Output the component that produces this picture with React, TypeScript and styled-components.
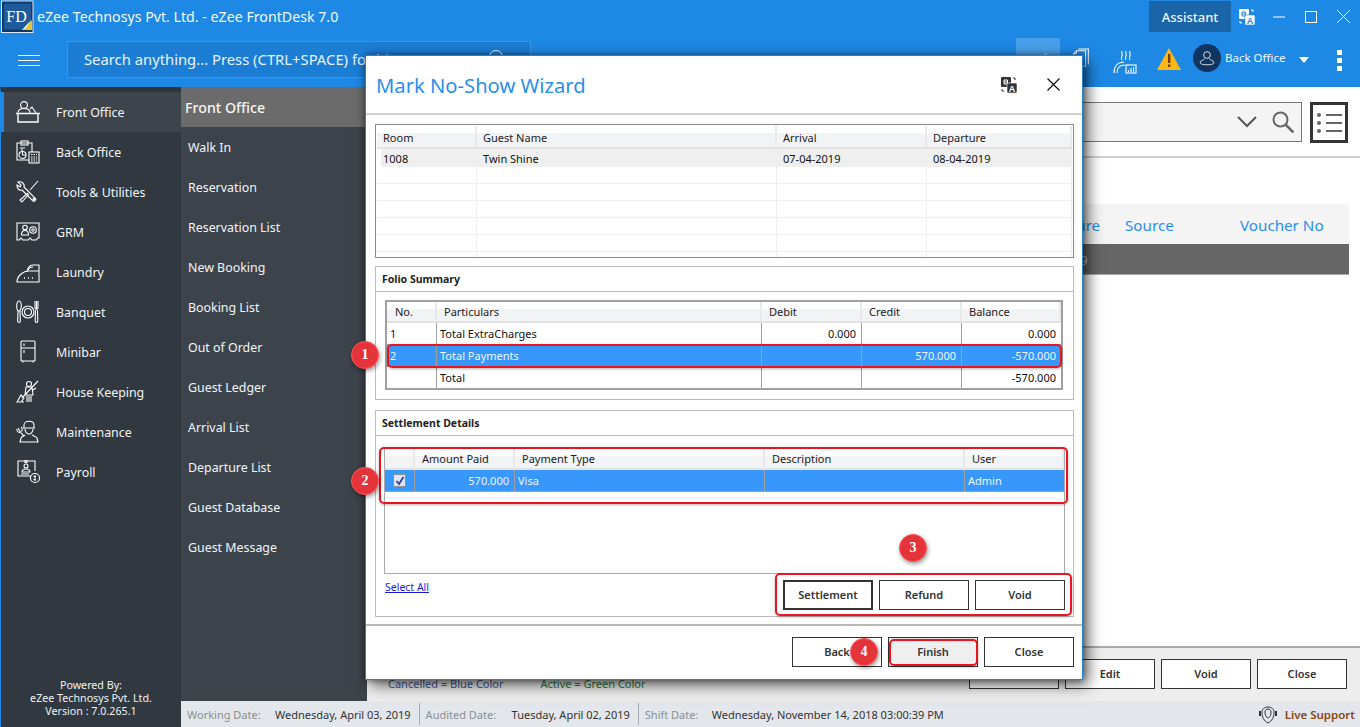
import React from "react";
import styled, { createGlobalStyle } from "styled-components";

const Global = createGlobalStyle`
  html, body { margin: 0; padding: 0; height: 100%; overflow: hidden; }
  #root { height: 100%; }
  * { box-sizing: border-box; }
  body { font-family: "Noto Sans", "Open Sans", sans-serif; }
`;

const Page = styled.div`
  position: relative; width: 1360px; height: 727px; overflow: hidden;
  display: flex; flex-direction: column; background: #1e88e5;
`;
const Header = styled.header`height: 87px; flex: none; display: flex; flex-direction: column; color: #fff;`;
const TitleBar = styled.div`height: 33px; display: flex; align-items: center; padding: 0 1px;`;
const AppTitle = styled.span`margin-left: 3px; font-size: 14.2px; color: #f2f8fe; flex: 1;`;
const Assistant = styled.div`
  width: 82px; height: 31px; background: #1a65a8; font-size: 13px; font-weight: 500;
  display: flex; align-items: center; justify-content: center; color: #f0f6fc;
`;
const TitleIcon = styled.div`width: 32px; display: flex; justify-content: center; align-items: center;`;
const ToolBar = styled.div`height: 54px; display: flex; align-items: flex-start;`;
const Burger = styled.div`
  width: 22px; height: 11px; margin: 22px 27px 0 18px; flex: none;
  border-top: 1px solid #fff; border-bottom: 1px solid #fff;
  display: flex; align-items: center;
  &::before { content: ""; display: block; height: 1px; width: 100%; background: #fff; }
`;
const SearchBar = styled.div`
  width: 464px; height: 37px; margin-top: 8px; background: #1b7dd4; border: 1px solid #3c96e6;
  display: flex; align-items: center; justify-content: space-between; padding: 0 22px 2px 16px;
  font-size: 14.800px; color: #e6f2fd; flex: none;
`;
const Tools = styled.div`flex: 1; display: flex; align-items: flex-start; padding-left: 485px; height: 100%;`;
const ChartSlot = styled.div`width: 44px; height: 44px; margin-top: 5px; background: #4a9fea; display: flex; justify-content: center; padding-top: 10px; flex: none;`;
const ToolSlot = styled.div<{ $w: number; $top?: number }>`width: ${p => p.$w}px; flex: none; display: flex; justify-content: center; padding-top: ${p => p.$top ?? 15}px;`;
const Avatar = styled.div`width: 28px; height: 28px; border-radius: 50%; background: #0f3560; display: flex; align-items: center; justify-content: center; margin: 11px 4px 0 3px; flex: none;`;
const UserName = styled.span`font-size: 11.5px; width: 74px; padding-top: 17px; color: #eef6fd; flex: none; white-space: nowrap;`;
const Caret = styled.span`width: 0; height: 0; border: 5px solid transparent; border-top: 6px solid #fff; border-bottom: 0; margin-top: 24px; flex: none;`;
const VDots = styled.div`
  margin: 17px 0 0 28px; width: 5px; flex: none; display: flex; flex-direction: column; gap: 3.500px;
  span { display: block; width: 4.500px; height: 4.500px; background: #fff; }
`;

const Body = styled.div`flex: 1; display: flex; min-height: 0;`;
const Sidebar = styled.nav`
  width: 181px; flex: none; background: #31383f; border-left: 1px solid #1e88e5;
  border-top: 5px solid #2d343b; display: flex; flex-direction: column; color: #f1f5f9;
`;
const NavItem = styled.div<{ $active?: boolean }>`
  height: 40px; flex: none; display: flex; align-items: center; gap: 16px; font-size: 12.400px;
  padding-left: ${p => (p.$active ? 12 : 15)}px;
  ${p => p.$active && "border-left: 3px solid #1e88e5; background: #3d444c;"}
`;
const Powered = styled.div`margin-top: auto; padding-bottom: 9px; text-align: center; font-size: 10.700px; line-height: 13px; color: #eef2f5;`;
const RightCol = styled.div`flex: 1; display: flex; flex-direction: column; min-width: 0;`;
const Upper = styled.div`flex: 1; display: flex; min-height: 0;`;
const SubMenu = styled.div`width: 186px; flex: none; background: #3d434b; color: #f1f5f9; display: flex; flex-direction: column;`;
const SubHead = styled.div`height: 40px; background: #6b6b6b; display: flex; align-items: center; padding-left: 4px; font-size: 14.200px; font-weight: 500; color: #f6f6f6;`;
const SubItem = styled.div`height: 40px; display: flex; align-items: center; padding-left: 7px; font-size: 12.400px;`;
const Main = styled.main`flex: 1; background: #fff; display: flex; flex-direction: column; min-width: 0;`;
const FilterBar = styled.div`height: 71px; border-bottom: 2px solid #cfcfcf; display: flex; justify-content: flex-end; padding: 15px 12px 0 0; gap: 8px; flex: none;`;
const FilterBox = styled.div`width: 320px; height: 40px; background: #f4f4f4; border: 1px solid #777; display: flex; align-items: center; justify-content: flex-end; gap: 15px; padding-right: 7px;`;
const ListBtn = styled.div`width: 38px; height: 41px; border: 3px solid #333; display: flex; align-items: center; justify-content: center;`;
const BgHead = styled.div`
  margin: 46px 11px 0 0; height: 40px; background: #f4f4f4; display: grid; grid-template-columns: 660px 98px 115px 1fr;
  align-items: center; color: #2a8fec; font-size: 15.200px; flex: none; padding-top: 2px;
`;
const BgRow = styled.div`
  margin-right: 11px; height: 31px; background: #666; border-bottom: 1px solid #aaa; display: grid; grid-template-columns: 658px 1fr;
  align-items: center; color: #d8d8d8; font-size: 12px; flex: none; padding-top: 3px;
`;
const Spacer = styled.div`flex: 1;`;
const BgFooter = styled.div`height: 55px; flex: none; background: #ededed; border-top: 2px solid #aaa; display: flex; padding: 11px 13px 0 21px; gap: 6px; justify-content: flex-end;`;
const Legend = styled.div`flex: 1; display: flex; gap: 37px; font-size: 11px; padding-top: 17px;`;
const LegendText = styled.span<{ $c: string }>`color: ${p => p.$c}; white-space: nowrap;`;
const Btn = styled.div<{ $thick?: boolean; $fill?: boolean }>`
  width: 90px; height: 30px; flex: none; background: ${p => (p.$fill ? "#efefef" : "#fff")};
  border: ${p => (p.$thick ? 2 : 1)}px solid #333; display: flex; align-items: center; justify-content: center;
  font-size: 11px; font-weight: 600; color: #333; padding-bottom: 2px;
`;
const Status = styled.footer`height: 26px; flex: none; background: #e3e7eb; display: flex; align-items: center; font-size: 11px; color: #333; padding: 0 5px 0 6px;`;
const StatusLabel = styled.span<{ $w: number }>`width: ${p => p.$w}px; flex: none; color: #8b8f93;`;
const StatusValue = styled.span`white-space: nowrap;`;
const StatusSep = styled.span`width: 1px; height: 22px; background: #a5a9ad; margin: 0 6px 0 8px; flex: none;`;
const Live = styled.div`margin-left: auto; display: flex; align-items: center; gap: 8px; color: #8a4513; font-weight: 600; font-size: 11.500px;`;

const Modal = styled.section`
  position: absolute; left: 365px; top: 55px; width: 718px; height: 625px; background: #fff;
  border: 1px solid #2b80cc; box-shadow: 5px 5px 14px rgba(0,0,0,.62), 0 0 6px rgba(0,0,0,.4);
  display: flex; flex-direction: column; z-index: 5;
`;
const ModalHead = styled.div`height: 59px; flex: none; border-bottom: 2px solid #cfcfcf; display: flex; align-items: center; padding: 0 22px 0 10px;`;
const ModalTitle = styled.h1`margin: 0; flex: 1; font-size: 20.200px; font-weight: 400; color: #2a8fec;`;
const ModalTools = styled.div`display: flex; align-items: center; gap: 30px;`;
const ModalBody = styled.div`flex: 1; padding: 9px 8px 0 9px; display: flex; flex-direction: column;`;
const GuestBox = styled.div`height: 134px; flex: none; border: 1px solid #8a8a90; padding: 1px; overflow: hidden;`;
const Row = styled.div<{ $cols: string; $h: number }>`
  display: grid; grid-template-columns: ${p => p.$cols}; height: ${p => p.$h}px; flex: none;
`;
const HeadRow = styled(Row)`background: linear-gradient(#fff 0 35%, #f2f3f5 35%); border-bottom: 2px solid #e2e2e2;`;
const HeadCell = styled.div<{ $pad?: number; $top?: number }>`
  display: flex; align-items: center; font-size: 11px; color: #222; padding: ${p => p.$top ?? 0}px 0 0 ${p => p.$pad ?? 7}px;
  border-right: 2px solid #e9e9e9; white-space: nowrap;
`;
const GuestRow = styled(Row)<{ $fill?: boolean }>`
  background: ${p => (p.$fill ? "linear-gradient(90deg, #fff 4px, #efefef 4px)" : "#fff")};
  ${p => !p.$fill && "border-bottom: 1px solid #eee;"}
`;
const GuestCell = styled.div`display: flex; align-items: center; font-size: 11px; color: #111; padding-left: 6px; border-right: 1px solid #eee; white-space: nowrap;`;
const Panel = styled.div<{ $h: number; $mt: number }>`height: ${p => p.$h}px; margin-top: ${p => p.$mt}px; flex: none; border: 1px solid #bcbcbc; display: flex; flex-direction: column;`;
const PanelHead = styled.div`height: 25px; flex: none; border-bottom: 1px solid #bcbcbc; display: flex; align-items: center; padding-left: 6px; font-size: 10.500px; font-weight: 700; color: #222;`;
const FolioTable = styled.div`margin: 8px 0 0 9px; width: 678px; height: 90px; border: 2px solid #a0a0a0; display: flex; flex-direction: column;`;
const DataRow = styled(Row)<{ $sel?: boolean; $last?: boolean }>`
  background: ${p => (p.$sel ? "#3797fb" : "#fff")};
  color: ${p => (p.$sel ? "#eef6ff" : "#111")};
  ${p => !p.$last && "border-bottom: 1px solid #a0a0a0;"}
`;
const DataCell = styled.div<{ $right?: boolean; $nb?: boolean; $center?: boolean }>`
  display: flex; align-items: center; font-size: 11px; padding: 0 3px; white-space: nowrap;
  ${p => !p.$nb && "border-right: 1px solid #a0a0a0;"}
  ${p => p.$right && "justify-content: flex-end; padding-right: 5px;"}
  ${p => p.$center && "justify-content: center;"}
`;
const Check = styled.div`width: 13px; height: 13px; background: #dfe5ee; border: 1px solid #8d8d8d; display: flex; align-items: center; justify-content: center;`;
const SettleTable = styled.div`margin: 12px 0 0 8px; width: 681px; height: 126px; border: 1px solid #aaa; display: flex; flex-direction: column; background: #fff;`;
const SettleFoot = styled.div`flex: 1; display: flex; justify-content: space-between; padding: 6px 8px 0 9px;`;
const LinkText = styled.a`font-size: 10.500px; color: #1a1ae0; text-decoration: underline;`;
const BtnGroup = styled.div`display: flex; gap: 6px;`;
const ModalFoot = styled.div`margin: 7px -8px 0 -9px; border-top: 2px solid #b8b8b8; flex: 1; display: flex; justify-content: flex-end; gap: 6px; padding: 11px 8px 0 0;`;

const Mark = styled.div<{ $x: number; $y: number; $w: number; $h: number }>`
  position: absolute; left: ${p => p.$x}px; top: ${p => p.$y}px; width: ${p => p.$w}px; height: ${p => p.$h}px;
  border: 2px solid #e8141f; border-radius: 5px; z-index: 6; box-shadow: 0 1px 3px rgba(0,0,0,.3);
`;
const Pin = styled.div<{ $x: number; $y: number }>`
  position: absolute; left: ${p => p.$x - 14}px; top: ${p => p.$y - 14}px; width: 28px; height: 28px; border-radius: 50%;
  background: #e5333a; border: 1px solid #f55; box-shadow: 1px 2px 4px rgba(0,0,0,.4); color: #fff; z-index: 7;
  display: flex; align-items: center; justify-content: center; font: bold 14px "Liberation Serif", serif;
`;

const Line = styled.svg`fill: none; stroke: #fff; stroke-width: 1.1; flex: none; display: block;`;
const I = ({ children, s = 24 }: { children: React.ReactNode; s?: number }) => (
  <Line width={s} height={s} viewBox="0 0 24 24">{children}</Line>
);

const icons: Record<string, React.ReactNode> = {
  front: <><circle cx="8" cy="5" r="3.4" /><path d="M2 13c0-3 2-4.500 6-4.500S14 10 14 13M14 9l2-2 4 6" /><path d="M0 13.500h24M2 14v8h20v-8" strokeWidth="1.400" /></>,
  back: <><path d="M13 20H1V3h15v9" /><rect x="5" y="1" width="7" height="4" /><path d="M4 8h5M6 9v2" /><circle cx="6.500" cy="15" r="3.500" /><path d="M6.500 15v-3.500M6.500 15H10" /><rect x="13" y="12" width="10" height="11" /><path d="M15 14.500h6M15 17h6M15 19h6M15 21h6" strokeDasharray="1.500 1" /></>,
  tools: <><path d="M2 2l3 3-1 2-3-2c-.5 3 2 6 5 5l11 11c1.500 1 3.500-1 2.500-2.500L8 7c1-3-2-6-6-5z" /><path d="M22 1l-8 9M12 13l-8 7 2 2 7-8" /><circle cx="18" cy="19" r="1" /></>,
  grm: <><path d="M1 3h22v15h-1c-1 0-1 2-2 2h-4c-1 0-1-2-2-2s-1 2-2 2H7c-1 0-1-2-2-2s-1 2-2 2H1z" /><circle cx="9" cy="7.500" r="2.300" /><path d="M5.500 15c0-3 1-4.500 3.500-4.500s3.500 1.500 3.500 4.500z" /><circle cx="17" cy="10" r="3.300" /><circle cx="17" cy="10" r="1.200" /></>,
  laundry: <><path d="M1 22c0-6 6-11 12-11h10v11zM11 11.500C12 6 14 5 17 5h6v6" /><path d="M8 18h1M12 18h1M16 18h1" strokeWidth="1.500" /><path d="M12 10c1-2.500 3-3 5-3" /></>,
  banquet: <><ellipse cx="3" cy="6" rx="2.300" ry="5" /><path d="M2 11l-.3 10c0 2 2.600 2 2.600 0L4 11" /><circle cx="12" cy="12" r="6" /><circle cx="12" cy="12" r="3.500" /><path d="M19 1v6c0 3 3 3 3 0V1M20.500 1v8M19.500 10l-.3 11c0 2 2.600 2 2.600 0l-.3-11" /></>,
  minibar: <><rect x="5" y="1" width="14" height="20" rx="1" /><path d="M5 8h14M8 3.500v2.500M8 10v3M7 21v1.500M17 21v1.500" /></>,
  house: <><circle cx="13" cy="4" r="2.500" /><path d="M10 7l-1 8h8l-1-8zM11 16v6M15 16v6M13 16v6M22 1L6 18M1 22l4-7 3 3-3 4zM6 22h2M17 10l3-2" /></>,
  maint: <><path d="M8 8V5c0-5 10-5 10 0v3zM7 8h12M9 9c0 3 2 5 4 5s4-2 4-5" /><path d="M9 15c-1 1-3 1.500-4 3l-1 4h18l-1-4c-1-1.500-3-2-5-3" /><path d="M2 8l3 5 3 3M1 9c-.5 2 1 3.500 3 3.500M5 7c1.500 1 1.500 3 .5 4.500" /></>,
  payroll: <><path d="M15 16H2V1h17v10" /><circle cx="10" cy="1.500" r="1.300" /><circle cx="10" cy="6" r="2" /><path d="M6 12c0-2 1.500-3 4-3s4 1 4 3zM5 14h8" /><circle cx="19" cy="18" r="4.500" /><path d="M19 15v6M17.500 16.500h2.500M17.500 19.500H20" /></>,
};

const nav: [string, string][] = [
  ["Front Office", "front"], ["Back Office", "back"], ["Tools & Utilities", "tools"], ["GRM", "grm"], ["Laundry", "laundry"],
  ["Banquet", "banquet"], ["Minibar", "minibar"], ["House Keeping", "house"], ["Maintenance", "maint"], ["Payroll", "payroll"],
];
const subs = ["Walk In", "Reservation", "Reservation List", "New Booking", "Booking List", "Out of Order", "Guest Ledger", "Arrival List", "Departure List", "Guest Database", "Guest Message"];

const Translate = ({ dark }: { dark?: boolean }) => {
  const c = dark ? "#333" : "#fff";
  const k = dark ? "#fff" : "#1e88e5";
  return (
    <svg width="16" height="16" viewBox="0 0 16 16">
      <rect x="0" y="0" width="10" height="10" rx="1" fill={c} />
      <path d="M3 3h3.500v4H3zM3 5h3.500" fill="none" stroke={k} />
      <rect x="6" y="6" width="10" height="10" rx="1" fill={c} stroke={k} strokeWidth=".6" />
      <text x="11" y="14.500" textAnchor="middle" fontSize="9" fontWeight="700" fill={k} fontFamily="Liberation Sans">A</text>
      <path d="M12 1l2 0 0 2M1 12v2h2" fill="none" stroke={c} />
    </svg>
  );
};

const Logo = () => (
  <svg width="33" height="33" viewBox="0 0 33 33">
    <rect x=".5" y="1" width="31.500" height="31.500" fill="#103a6b" stroke="#dfe8f0" />
    <path d="M3 3.500h27v17l-9 9H3z" fill="#1f5a9c" />
    <path d="M21 30l10-10v10z" fill="#e5c438" />
    <path d="M21 30l4-2 5-8z" fill="#ffffff" />
    <text x="15.500" y="22" textAnchor="middle" fontSize="16" fill="#fff" fontFamily="Liberation Serif">FD</text>
  </svg>
);

const GUEST = "100px 300px 150px 145px";
const FOLIO = "50px 325px 100px 100px 99px";
const SETTLE = "30px 100px 250px 200px 99px";

export default function App() {
  return (
    <Page>
      <Global />
      <Header>
        <TitleBar>
          <Logo />
          <AppTitle>eZee Technosys Pvt. Ltd. - eZee FrontDesk 7.0</AppTitle>
          <Assistant>Assistant</Assistant>
          <TitleIcon><Translate /></TitleIcon>
          <TitleIcon><svg width="12" height="12"><path d="M0 6h12" stroke="#fff" /></svg></TitleIcon>
          <TitleIcon><svg width="12" height="12"><rect x=".5" y=".5" width="11" height="11" fill="none" stroke="#fff" /></svg></TitleIcon>
          <TitleIcon><svg width="13" height="13"><path d="M0 0l13 13M13 0L0 13" stroke="#fff" /></svg></TitleIcon>
        </TitleBar>
        <ToolBar>
          <Burger />
          <SearchBar>
            <span>Search anything... Press (CTRL+SPACE) for hint</span>
            <svg width="20" height="20" viewBox="0 0 20 20" fill="none" stroke="#fff"><circle cx="8" cy="8" r="6.500" /><path d="M13 13l6 6" /></svg>
          </SearchBar>
          <Tools>
            <ChartSlot><I s={22}><path d="M2 20l6-7 5 3 8-10M3 22h18" /></I></ChartSlot>
            <ToolSlot $w={42}><I s={22}><path d="M7 3h10v17H4V6zM9 1h11v17M7 3v3H4M8 10h6M8 13h6M8 16h6" /></I></ToolSlot>
            <ToolSlot $w={46} $top={17}><I><path d="M9 1c-1 2 1 3 0 5s-1 2 0 4M13 1c-1 2 1 3 0 5s-1 2 0 4M17 1c-1 2 1 3 0 5s-1 2 0 4" /><path d="M1 23c0-7 4-11 10-11M4 23c0-5 3-8 8-8" /><rect x="13" y="15" width="10" height="8" /><path d="M15.500 22v-2M18 22v-4M20.500 22v-5" /></I></ToolSlot>
            <ToolSlot $w={42}><svg width="24" height="22" viewBox="0 0 24 22"><path d="M12 0l12 22H0z" fill="#fcb712" /><rect x="11" y="6" width="2.400" height="9" fill="#7a3d0c" /><rect x="11" y="16.500" width="2.400" height="2.500" fill="#7a3d0c" /></svg></ToolSlot>
            <Avatar><I s={18}><circle cx="12" cy="8" r="4.500" /><path d="M9 13c-1 2-6 2-6 5 0 2 2 3 9 3s9-1 9-3c0-3-5-3-6-5" /></I></Avatar>
            <UserName>Back Office</UserName>
            <Caret />
            <VDots><span /><span /><span /></VDots>
          </Tools>
        </ToolBar>
      </Header>
      <Body>
        <Sidebar>
          {nav.map(([label, key], i) => (
            <NavItem key={key} $active={i === 0}>
              <I>{icons[key]}</I>
              <span>{label}</span>
            </NavItem>
          ))}
          <Powered>Powered By:<br />eZee Technosys Pvt. Ltd.<br />Version : 7.0.265.1</Powered>
        </Sidebar>
        <RightCol>
          <Upper>
            <SubMenu>
              <SubHead>Front Office</SubHead>
              {subs.map(s => <SubItem key={s}>{s}</SubItem>)}
            </SubMenu>
            <Main>
              <FilterBar>
                <FilterBox>
                  <svg width="20" height="12" viewBox="0 0 20 12" fill="none" stroke="#555" strokeWidth="2"><path d="M1 1l9 9 9-9" /></svg>
                  <svg width="22" height="22" viewBox="0 0 22 22" fill="none" stroke="#666" strokeWidth="2"><circle cx="8.500" cy="8.500" r="7" /><path d="M13.500 13.500l8 8" strokeWidth="2.500" /></svg>
                </FilterBox>
                <ListBtn>
                  <svg width="26" height="22" viewBox="0 0 26 22" fill="#666"><circle cx="3" cy="3" r="2" /><circle cx="3" cy="11" r="2" /><circle cx="3" cy="19" r="2" /><path d="M10 2h16v2H10zM10 10h16v2H10zM10 18h16v2H10z" /></svg>
                </ListBtn>
              </FilterBar>
              <BgHead><span /><span>Departure</span><span>Source</span><span>Voucher No</span></BgHead>
              <BgRow><span /><span>08-04-2019</span></BgRow>
              <Spacer />
              <BgFooter>
                <Legend>
                  <LegendText $c="#3d5aa0">Cancelled = Blue Color</LegendText>
                  <LegendText $c="#1f7a3b">Active = Green Color</LegendText>
                </Legend>
                <Btn>Print</Btn>
                <Btn>Edit</Btn>
                <Btn>Void</Btn>
                <Btn>Close</Btn>
              </BgFooter>
            </Main>
          </Upper>
          <Status>
            <StatusLabel $w={88}>Working Date:</StatusLabel>
            <StatusValue>Wednesday, April 03, 2019</StatusValue>
            <StatusSep />
            <StatusLabel $w={86}>Audited Date:</StatusLabel>
            <StatusValue>Tuesday, April 02, 2019</StatusValue>
            <StatusSep />
            <StatusLabel $w={67}>Shift Date:</StatusLabel>
            <StatusValue>Wednesday, November 14, 2018 03:00:39 PM</StatusValue>
            <Live>
              <svg width="18" height="20" viewBox="0 0 18 20" fill="none" stroke="#333"><path d="M3 9C2 1 16 1 15 9c0 4-2 8-6 10-4-2-6-6-6-10z" /><path d="M6 8c0-4 6-4 6 0s-1 5-3 6c-2-1-3-3-3-6z" /><path d="M1 7v5M17 7v5" strokeWidth="2" /></svg>
              <span>Live Support</span>
            </Live>
          </Status>
        </RightCol>
      </Body>

      <Modal>
        <ModalHead>
          <ModalTitle>Mark No-Show Wizard</ModalTitle>
          <ModalTools>
            <Translate dark />
            <svg width="13" height="13"><path d="M.5.500l12 12M12.500.500l-12 12" stroke="#111" strokeWidth="1.200" /></svg>
          </ModalTools>
        </ModalHead>
        <ModalBody>
          <GuestBox>
            <HeadRow $cols={GUEST} $h={23}>
              <HeadCell $pad={6} $top={1}>Room</HeadCell><HeadCell $pad={6} $top={1}>Guest Name</HeadCell><HeadCell $pad={6} $top={1}>Arrival</HeadCell><HeadCell $pad={6} $top={1}>Departure</HeadCell>
            </HeadRow>
            <GuestRow $cols={GUEST} $h={18} $fill>
              <GuestCell>1008</GuestCell><GuestCell>Twin Shine</GuestCell><GuestCell>07-04-2019</GuestCell><GuestCell>08-04-2019</GuestCell>
            </GuestRow>
            {[0, 1, 2, 3, 4, 5].map(i => (
              <GuestRow key={i} $cols={GUEST} $h={17}>
                <GuestCell /><GuestCell /><GuestCell /><GuestCell />
              </GuestRow>
            ))}
          </GuestBox>

          <Panel $h={134} $mt={8}>
            <PanelHead>Folio Summary</PanelHead>
            <FolioTable>
              <HeadRow $cols={FOLIO} $h={21}>
                <HeadCell $pad={8}>No.</HeadCell><HeadCell>Particulars</HeadCell><HeadCell>Debit</HeadCell><HeadCell>Credit</HeadCell><HeadCell>Balance</HeadCell>
              </HeadRow>
              <DataRow $cols={FOLIO} $h={22}>
                <DataCell>1</DataCell><DataCell>Total ExtraCharges</DataCell><DataCell $right>0.000</DataCell><DataCell /><DataCell $right $nb>0.000</DataCell>
              </DataRow>
              <DataRow $cols={FOLIO} $h={22} $sel>
                <DataCell>2</DataCell><DataCell>Total Payments</DataCell><DataCell /><DataCell $right>570.000</DataCell><DataCell $right $nb>-570.000</DataCell>
              </DataRow>
              <DataRow $cols={FOLIO} $h={21} $last>
                <DataCell /><DataCell>Total</DataCell><DataCell /><DataCell /><DataCell $right $nb>-570.000</DataCell>
              </DataRow>
            </FolioTable>
          </Panel>

          <Panel $h={207} $mt={10}>
            <PanelHead>Settlement Details</PanelHead>
            <SettleTable>
              <HeadRow $cols={SETTLE} $h={21}>
                <HeadCell /><HeadCell>Amount Paid</HeadCell><HeadCell>Payment Type</HeadCell><HeadCell>Description</HeadCell><HeadCell>User</HeadCell>
              </HeadRow>
              <DataRow $cols={SETTLE} $h={22} $sel>
                <DataCell $center>
                  <Check><svg width="10" height="10" viewBox="0 0 10 10" fill="none" stroke="#2a3f9e" strokeWidth="1.800"><path d="M1.500 5l2.500 3 4.500-7" /></svg></Check>
                </DataCell>
                <DataCell $right>570.000</DataCell><DataCell>Visa</DataCell><DataCell /><DataCell $nb>Admin</DataCell>
              </DataRow>
            </SettleTable>
            <SettleFoot>
              <LinkText>Select All</LinkText>
              <BtnGroup>
                <Btn $thick>Settlement</Btn>
                <Btn>Refund</Btn>
                <Btn>Void</Btn>
              </BtnGroup>
            </SettleFoot>
          </Panel>
          <ModalFoot>
            <Btn>Back</Btn>
            <Btn $fill>Finish</Btn>
            <Btn>Close</Btn>
          </ModalFoot>
        </ModalBody>
      </Modal>

      <Mark $x={387} $y={344} $w={675} $h={24} />
      <Mark $x={379} $y={447} $w={689} $h={57} />
      <Mark $x={775} $y={573} $w={297} $h={43} />
      <Mark $x={889} $y={639} $w={89} $h={27} />
      <Pin $x={365} $y={355}>1</Pin>
      <Pin $x={365} $y={481}>2</Pin>
      <Pin $x={913} $y={548}>3</Pin>
      <Pin $x={864} $y={652}>4</Pin>
    </Page>
  );
}
